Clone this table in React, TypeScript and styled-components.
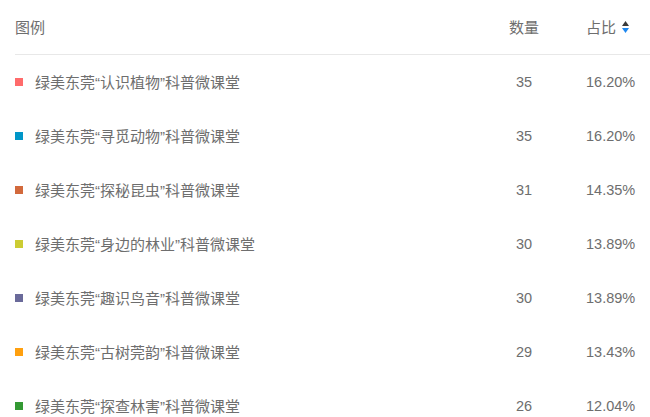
import React from "react";
import styled, { createGlobalStyle } from "styled-components";

const GlobalStyle = createGlobalStyle`
  body {
    margin: 0;
    background: #fff;
    font-family: "Liberation Sans", "Noto Sans CJK SC", sans-serif;
  }
`;

const Table = styled.div`
  width: 650px;
  height: 417px;
  overflow: hidden;
  padding-left: 15px;
  box-sizing: border-box;
  color: #6e6e6e;
  font-size: 15px;
`;

const Row = styled.div<{ head?: boolean }>`
  display: grid;
  grid-template-columns: 1fr 80px 86px;
  align-items: center;
  height: 53px;
  padding-bottom: 1px;
  border-bottom: ${(p) => (p.head ? "1px solid #e8e8e8" : "none")};
`;

const NameCell = styled.div`
  display: flex;
  align-items: center;
  gap: 12px;
`;

const Marker = styled.span<{ color: string }>`
  width: 8px;
  height: 8px;
  background: ${(p) => p.color};
`;

const CountCell = styled.div<{ num?: boolean }>`
  text-align: center;
  font-size: ${(p) => (p.num ? "14.5px" : "15px")};
`;

const RatioCell = styled.div<{ num?: boolean }>`
  display: flex;
  align-items: center;
  gap: 6px;
  padding-left: 22px;
  font-size: ${(p) => (p.num ? "14.5px" : "15px")};
`;

const SortIcon = styled.svg`
  width: 7px;
  height: 12px;
`;

const rows = [
  { color: "#ff6b6b", name: "绿美东莞“认识植物”科普微课堂", count: 35, ratio: "16.20%" },
  { color: "#0096c8", name: "绿美东莞“寻觅动物”科普微课堂", count: 35, ratio: "16.20%" },
  { color: "#d2693c", name: "绿美东莞“探秘昆虫”科普微课堂", count: 31, ratio: "14.35%" },
  { color: "#cccc33", name: "绿美东莞“身边的林业”科普微课堂", count: 30, ratio: "13.89%" },
  { color: "#6a6a9a", name: "绿美东莞“趣识鸟音”科普微课堂", count: 30, ratio: "13.89%" },
  { color: "#ffa00f", name: "绿美东莞“古树莞韵”科普微课堂", count: 29, ratio: "13.43%" },
  { color: "#339933", name: "绿美东莞“探查林害”科普微课堂", count: 26, ratio: "12.04%" },
];

export default function App() {
  return (
    <>
      <GlobalStyle />
      <Table>
        <Row head>
          <div>图例</div>
          <CountCell>数量</CountCell>
          <RatioCell>
            占比
            <SortIcon viewBox="0 0 7 12">
              <path d="M3.5 0 L7 5 L0 5 Z" fill="#3a3a3a" />
              <path d="M0 7 L7 7 L3.5 12 Z" fill="#1e88f0" />
            </SortIcon>
          </RatioCell>
        </Row>
        {rows.map((r) => (
          <Row key={r.name}>
            <NameCell>
              <Marker color={r.color} />
              {r.name}
            </NameCell>
            <CountCell num>{r.count}</CountCell>
            <RatioCell num>{r.ratio}</RatioCell>
          </Row>
        ))}
      </Table>
    </>
  );
}
